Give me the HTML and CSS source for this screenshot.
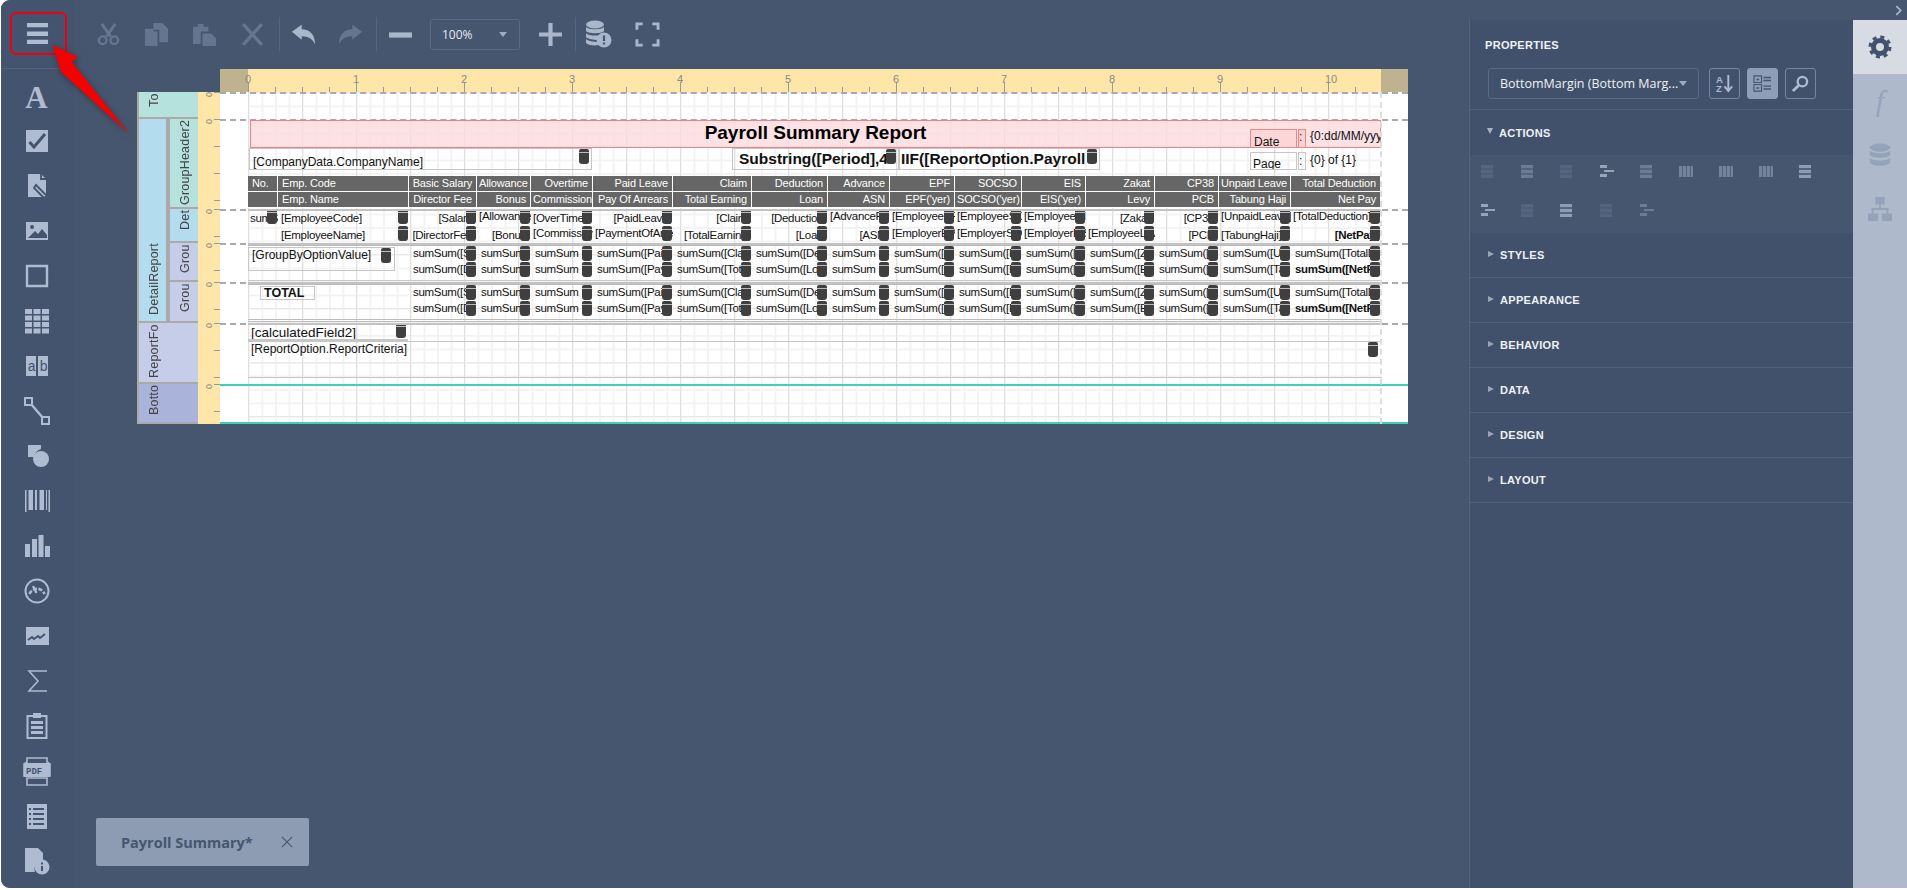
FILE: index.html
```html
<!DOCTYPE html>
<html lang="en">
<head>
<meta charset="utf-8">
<title>Report Designer</title>
<link rel="stylesheet" href="styles.css">
</head>
<body>
<div class="app">
  <aside class="tools">
    <div class="menu"><svg class="i24" viewBox="0 0 24 24"><path d="M1 1h22v4.500H1zM1 10h22v4.500H1zM1 18.500h22v4.500H1z"/></svg></div>
    <div class="tool tool-a"><span class="glyph-a">A</span></div>
    <div class="tool"><svg viewBox="0 0 32 32"><path d="M5 5h22v22H5z"/><path class="cut" d="M8.500 17l4.500 5 11-13" fill="none" stroke-width="3"/></svg></div>
    <div class="tool"><svg viewBox="0 0 32 32"><path d="M7 4h13l5 5v18H7z"/><path class="cut" d="M20 3v6h6M15 15l11 11-3 2-10-10z" fill="none" stroke-width="1.800"/></svg></div>
    <div class="tool"><svg viewBox="0 0 32 32"><path d="M5 7h22v18H5z"/><path class="cutf" d="M7 23l7-7 3 3 4-5 5 6v3z"/><circle class="cutf" cx="11" cy="12" r="2"/></svg></div>
    <div class="tool"><svg viewBox="0 0 32 32"><path d="M6 6h20v20H6z" fill="none" stroke="#aebbd0" stroke-width="2.400"/></svg></div>
    <div class="tool"><svg viewBox="0 0 32 32"><path d="M4 4h7v5H4zM12.500 4h7v5h-7zM21 4h7v5h-7zM4 10.500h7v5H4zM12.500 10.500h7v5h-7zM21 10.500h7v5h-7zM4 17h7v5H4zM12.500 17h7v5h-7zM21 17h7v5h-7zM4 23.500h7v5H4zM12.500 23.500h7v5h-7zM21 23.500h7v5h-7z"/></svg></div>
    <div class="tool"><svg viewBox="0 0 32 32"><path d="M5 6h10v20H5zM17 6h10v20H17z"/><text class="ab" x="6.500" y="21">a</text><text class="ab" x="18.500" y="21">b</text></svg></div>
    <div class="tool"><svg viewBox="0 0 32 32"><path d="M4 3h7v7H4zM21 22h7v7h-7z" fill="none" stroke="#aebbd0" stroke-width="2"/><path d="M10 9l12 14" fill="none" stroke="#aebbd0" stroke-width="2.400"/></svg></div>
    <div class="tool"><svg viewBox="0 0 32 32"><path d="M7 5h13v4a10 10 0 0 0-7 8H7z"/><circle cx="20" cy="19" r="8"/></svg></div>
    <div class="tool"><svg viewBox="0 0 32 32"><path d="M4 5h1.500v22H4zM7.500 5H12v20H7.500zM14 5h2v20h-2zM18.500 5H23v20h-4.500zM25 5h1v20h-1zM27.500 5H29v22h-1.500z"/></svg></div>
    <div class="tool"><svg viewBox="0 0 32 32"><path d="M4 14h5v13H4zM11 9h5v18h-5zM17.500 5h5v22h-5zM24 16h5v11h-5z"/></svg></div>
    <div class="tool"><svg viewBox="0 0 32 32"><circle cx="16" cy="16" r="11.500" fill="none" stroke="#aebbd0" stroke-width="2"/><path d="M8.500 19a8 8 0 0 1 15 0" fill="none" stroke="#aebbd0" stroke-width="2.600" stroke-dasharray="4 1.500"/><path d="M12 11l3.500 7" stroke="#aebbd0" stroke-width="2.400"/></svg></div>
    <div class="tool"><svg viewBox="0 0 32 32"><path d="M5 7h23v18H5z"/><path class="cut" d="M7 20l4-3 2 2 4-3 2 2 5-4" fill="none" stroke-width="2"/></svg></div>
    <div class="tool"><svg viewBox="0 0 32 32"><path d="M26 6H8l9 10-9 10h18" fill="none" stroke="#aebbd0" stroke-width="1.600"/></svg></div>
    <div class="tool"><svg viewBox="0 0 32 32"><path d="M6.500 6h19v22h-19z" fill="none" stroke="#aebbd0" stroke-width="2"/><path d="M12 3h8v5h-8zM10 11h12v3H10zM10 16h12v3H10zM10 21h12v3H10z"/></svg></div>
    <div class="tool"><svg viewBox="0 0 32 32"><path d="M6 3h20v4l3 2v12H3V9l3-2zM6 23h20v7H6z" fill="none" stroke="#aebbd0" stroke-width="1.600"/><path d="M3 8h26v14H3z"/><text class="pdf" x="5" y="19">PDF</text></svg></div>
    <div class="tool"><svg viewBox="0 0 32 32"><path d="M6 4h20v25H6z"/><path class="cut" d="M12 9h11M12 14h11M12 19h11M12 24h11M8 9h2M8 14h2M8 19h2M8 24h2" stroke-width="1.800"/></svg></div>
    <div class="tool"><svg viewBox="0 0 32 32"><path d="M4 3h13l5 5v7a9 9 0 0 0-8 12H4z"/><circle cx="21" cy="22" r="7.500"/><path class="cut" d="M21 21v5M21 17.500v2" stroke-width="2"/></svg></div>
  </aside>

  <main class="center">
    <div class="toolbar">
      <div class="tb"><svg class="off" viewBox="0 0 26 24"><path d="M6 1l9 13M20 1L11 14" fill="none" stroke-width="3"/><circle cx="7" cy="18" r="4" fill="none" stroke-width="2.400"/><circle cx="19" cy="18" r="4" fill="none" stroke-width="2.400"/></svg></div>
      <div class="tb"><svg class="off" viewBox="0 0 26 26"><path d="M1 7h9v3h4v15H1zM10 1h9l6 6v14h-9V8h-6z"/></svg></div>
      <div class="tb"><svg class="off" viewBox="0 0 26 26"><path d="M1 5h5V2h6v3h5v5H9v13H1zM11 12h9l5 5v8H11z"/></svg></div>
      <div class="tb"><svg class="off" viewBox="0 0 24 24"><path d="M3 2l18 20M21 2L3 22" fill="none" stroke-width="3.200"/></svg></div>
      <div class="sep sep-a"></div>
      <div class="tb tb-s"><svg class="on" viewBox="0 0 28 24"><path d="M1 9l11-8v5c9 0 15 6 15 17-3-6-7-9-15-9v4z"/></svg></div>
      <div class="tb tb-s"><svg class="off" viewBox="0 0 28 24"><path d="M27 9L16 1v5C7 6 1 12 1 23c3-6 7-9 15-9v4z"/></svg></div>
      <div class="sep sep-b"></div>
      <div class="tb tb-s"><svg class="on" viewBox="0 0 24 24"><path d="M1 10h22v5H1z"/></svg></div>
      <div class="zoom"><span>100%</span><i class="tri-d"></i></div>
      <div class="tb tb-plus"><svg class="on" viewBox="0 0 24 24"><path d="M1 10h9V1h4v9h9v4h-9v9h-4v-9H1z"/></svg></div>
      <div class="sep"></div>
      <div class="tb tb-db"><svg class="on" viewBox="0 0 28 28"><ellipse cx="11" cy="4.500" rx="9" ry="4"/><path d="M2 7c2 3 16 3 18 0v4c-2 3-16 3-18 0zM2 13c2 3 12 3 13 2-1 2-1 3-1 5-5 0-10-1-12-3zM2 19c2 2 7 3 12 3l1 3c-6 1-11 0-13-2z"/><circle cx="20" cy="20" r="7.500"/><path class="cut" d="M20 15.500v5.500M20 22.500v2" stroke-width="2.200"/></svg></div>
      <div class="tb tb-fs"><svg class="on" viewBox="0 0 26 26"><path d="M8 2H2v6M18 2h6v6M8 24H2v-6M18 24h6v-6" fill="none" stroke-width="3"/></svg></div>
    </div>

    <div class="ruler">
      <div class="corner corner-l"></div>
      <div class="track">
        <span>0</span><span>1</span><span>2</span><span>3</span><span>4</span><span>5</span><span>6</span><span>7</span><span>8</span><span>9</span><span>10</span>
      </div>
      <div class="corner corner-r"></div>
    </div>

    <div class="design">
      <div class="lb lb-top">To</div>
      <div class="lb lb-detail">DetailReport</div>
      <div class="lb lb-gh">GroupHeader2</div>
      <div class="lb lb-det">Det</div>
      <div class="lb lb-g1">Grou</div>
      <div class="lb lb-g2">Grou</div>
      <div class="lb lb-foot">ReportFo</div>
      <div class="lb lb-bot">Botto</div>

      <div class="lr lr1"><b>0</b></div>
      <div class="lr lr2"><b>0</b></div>
      <div class="lr lr3"><b>0</b></div>
      <div class="lr lr4"><b>0</b></div>
      <div class="lr lr5"><b>0</b></div>
      <div class="lr lr6"><b>0</b></div>
      <div class="lr lr7"><b>0</b></div>

      <div class="page">
        <section class="band band-top"></section>

        <section class="band band-gh">
          <div class="ctl title">Payroll Summary Report</div>
          <div class="ctl date-l">Date</div>
          <div class="ctl date-c">:</div>
          <div class="ctl date-v">{0:dd/MM/yyyy}</div>
          <div class="ctl page-l">Page</div>
          <div class="ctl page-c">:</div>
          <div class="ctl page-v">{0} of {1}</div>
          <div class="ctl company d">[CompanyData.CompanyName]</div>
          <div class="ctl period d">Substring([Period],4</div>
          <div class="ctl payroll d">IIF([ReportOption.Payroll</div>
          <div class="tbl thead">
            <div class="l">No.</div><div class="l">Emp. Code</div><div>Basic Salary</div><div>Allowance</div><div>Overtime</div><div>Paid Leave</div><div>Claim</div><div>Deduction</div><div>Advance</div><div>EPF</div><div>SOCSO</div><div>EIS</div><div>Zakat</div><div>CP38</div><div>Unpaid Leave</div><div>Total Deduction</div>
            <div class="l"></div><div class="l">Emp. Name</div><div>Director Fee</div><div>Bonus</div><div>Commission</div><div>Pay Of Arrears</div><div>Total Earning</div><div>Loan</div><div>ASN</div><div>EPF('yer)</div><div>SOCSO('yer)</div><div>EIS('yer)</div><div>Levy</div><div>PCB</div><div>Tabung Haji</div><div>Net Pay</div>
          </div>
        </section>

        <section class="band band-det">
          <div class="tbl tdata">
            <div class="c d">sumSum</div><div class="c d pad">[EmployeeCode]</div><div class="c d r">[Salary]</div><div class="c d hi">[Allowance]</div><div class="c d">[OverTime]</div><div class="c d r">[PaidLeave]</div><div class="c d r">[Claim]</div><div class="c d r">[Deduction]</div><div class="c d hi">[AdvanceP]</div><div class="c d hi">[EmployeeEPF]</div><div class="c d hi">[EmployeeSO]</div><div class="c d hi">[EmployeeEIS]</div><div class="c d r">[Zakat]</div><div class="c d r">[CP38]</div><div class="c d hi">[UnpaidLeave]</div><div class="c d hi">[TotalDeduction]</div>
            <div class="c"></div><div class="c d pad">[EmployeeName]</div><div class="c d r">[DirectorFee]</div><div class="c d r">[Bonus]</div><div class="c d hi">[Commission]</div><div class="c d hi">[PaymentOfArrears]</div><div class="c d r">[TotalEarning]</div><div class="c d r">[Loan]</div><div class="c d r">[ASN]</div><div class="c d hi">[EmployerEPF]</div><div class="c d hi">[EmployerSO]</div><div class="c d hi">[EmployerEIS]</div><div class="c d hi">[EmployeeLevy]</div><div class="c d r">[PCB]</div><div class="c d">[TabungHaji]</div><div class="c d r b">[NetPay]</div>
          </div>
        </section>

        <section class="band band-g1">
          <div class="ctl groupby d">[GroupByOptionValue]</div>
          <div class="tbl tsum">
            <div class="sp"></div><div class="c d">sumSum([Salary])</div><div class="c d">sumSum([Allowance])</div><div class="c d">sumSum([OverTime])</div><div class="c d">sumSum([PaidLeave])</div><div class="c d">sumSum([Claim])</div><div class="c d">sumSum([Deduction])</div><div class="c d">sumSum([Advance])</div><div class="c d">sumSum([EmployeeEPF])</div><div class="c d">sumSum([EmployeeSOCSO])</div><div class="c d">sumSum([EmployeeEIS])</div><div class="c d">sumSum([Zakat])</div><div class="c d">sumSum([CP38])</div><div class="c d">sumSum([UnpaidLeave])</div><div class="c d">sumSum([TotalDeduction])</div>
            <div class="sp"></div><div class="c d">sumSum([DirectorFee])</div><div class="c d">sumSum([Bonus])</div><div class="c d">sumSum([Commission])</div><div class="c d">sumSum([PaymentOfArrears])</div><div class="c d">sumSum([TotalEarning])</div><div class="c d">sumSum([Loan])</div><div class="c d">sumSum([ASN])</div><div class="c d">sumSum([EmployerEPF])</div><div class="c d">sumSum([EmployerSOCSO])</div><div class="c d">sumSum([EmployerEIS])</div><div class="c d">sumSum([EmployeeLevy])</div><div class="c d">sumSum([PCB])</div><div class="c d">sumSum([TabungHaji])</div><div class="c d b">sumSum([NetPay])</div>
          </div>
        </section>

        <section class="band band-g2">
          <div class="ctl total">TOTAL</div>
          <div class="tbl tsum">
            <div class="sp"></div><div class="c d">sumSum([Salary])</div><div class="c d">sumSum([Allowance])</div><div class="c d">sumSum([OverTime])</div><div class="c d">sumSum([PaidLeave])</div><div class="c d">sumSum([Claim])</div><div class="c d">sumSum([Deduction])</div><div class="c d">sumSum([Advance])</div><div class="c d">sumSum([EmployeeEPF])</div><div class="c d">sumSum([EmployeeSOCSO])</div><div class="c d">sumSum([EmployeeEIS])</div><div class="c d">sumSum([Zakat])</div><div class="c d">sumSum([CP38])</div><div class="c d">sumSum([UnpaidLeave])</div><div class="c d">sumSum([TotalDeduction])</div>
            <div class="sp"></div><div class="c d">sumSum([DirectorFee])</div><div class="c d">sumSum([Bonus])</div><div class="c d">sumSum([Commission])</div><div class="c d">sumSum([PaymentOfArrears])</div><div class="c d">sumSum([TotalEarning])</div><div class="c d">sumSum([Loan])</div><div class="c d">sumSum([ASN])</div><div class="c d">sumSum([EmployerEPF])</div><div class="c d">sumSum([EmployerSOCSO])</div><div class="c d">sumSum([EmployerEIS])</div><div class="c d">sumSum([EmployeeLevy])</div><div class="c d">sumSum([PCB])</div><div class="c d">sumSum([TabungHaji])</div><div class="c d b">sumSum([NetPay])</div>
          </div>
        </section>

        <section class="band band-foot">
          <div class="ctl calc d">[calculatedField2]</div>
          <div class="ctl criteria d">[ReportOption.ReportCriteria]</div>
        </section>

        <section class="band band-bot"></section>
      </div>
    </div>

    <div class="tab"><span>Payroll Summary*</span><svg viewBox="0 0 14 14"><path d="M1 1l12 12M13 1L1 13"/></svg></div>
  </main>

  <aside class="side">
    <div class="strip"><svg viewBox="0 0 8 12"><path d="M1.500 1l5 5-5 5"/></svg></div>
    <div class="side-body">
      <div class="panel">
        <h2 class="ptitle">PROPERTIES</h2>
        <div class="prow">
          <div class="select"><span>BottomMargin (Bottom Marg...</span><i class="tri-d"></i></div>
          <div class="pbtn"><svg viewBox="0 0 20 20"><text class="az" x="1" y="9">A</text><text class="az" x="1" y="19">Z</text><path d="M14 1v15M10 13l4 5 4-5" fill="none" stroke="#aebbd0" stroke-width="2"/></svg></div>
          <div class="pbtn pbtn-on"><svg viewBox="0 0 20 20"><path d="M1 2h8v7H1zM1 11h8v7H1z" fill="none" stroke="#46566f" stroke-width="1.200"/><path d="M3.500 5h3v1.500h-3zM3.500 14h3v1.500h-3zM11 3h8v1.500h-8zM11 6h8v1.500h-8zM11 12h8v1.500h-8zM11 15h8v1.500h-8z" fill="#46566f"/></svg></div>
          <div class="pbtn"><svg viewBox="0 0 20 20"><circle cx="12" cy="8" r="5" fill="none" stroke="#aebbd0" stroke-width="2.400"/><path d="M8 12l-6 6" stroke="#aebbd0" stroke-width="3"/></svg></div>
        </div>
        <div class="sec sec-open"><i class="tri-o"></i>ACTIONS</div>
        <div class="acts">
          <i class="ai"></i><i class="ai ai-m"></i><i class="ai"></i><i class="ai ai-h"></i><i class="ai ai-m"></i><i class="ai ai-w"></i><i class="ai ai-w"></i><i class="ai ai-w"></i><i class="ai ai-b"></i>
          <i class="ai ai-h"></i><i class="ai"></i><i class="ai ai-b"></i><i class="ai"></i><i class="ai ai-h ai-h2"></i>
        </div>
        <div class="sec"><i class="tri-r"></i>STYLES</div>
        <div class="sec"><i class="tri-r"></i>APPEARANCE</div>
        <div class="sec"><i class="tri-r"></i>BEHAVIOR</div>
        <div class="sec"><i class="tri-r"></i>DATA</div>
        <div class="sec"><i class="tri-r"></i>DESIGN</div>
        <div class="sec"><i class="tri-r"></i>LAYOUT</div>
      </div>
      <div class="rtabs">
        <div class="rt rt-on"><svg viewBox="0 0 24 24"><circle cx="12" cy="12" r="6.500" fill="none" stroke="#42526c" stroke-width="5"/><circle cx="12" cy="12" r="10" fill="none" stroke="#42526c" stroke-width="3" stroke-dasharray="4 3.850"/></svg></div>
        <div class="rt"><span class="fx">f</span></div>
        <div class="rt"><svg viewBox="0 0 24 26"><ellipse cx="12" cy="5" rx="11" ry="4.500"/><path d="M1 8c3 4 19 4 22 0v5c-3 4-19 4-22 0zM1 16c3 4 19 4 22 0v5c-3 5-19 5-22 0z"/></svg></div>
        <div class="rt"><svg viewBox="0 0 26 26"><path d="M8 0h10v8H8zM0 18h11v8H0zM15 18h11v8H15z"/><path d="M13 8v5M5 18v-5h16v5" fill="none" stroke="#95a3ba" stroke-width="2"/></svg></div>
      </div>
    </div>
  </aside>

  <div class="callout"></div>
  <svg class="arrow" viewBox="0 0 90 100"><path d="M5.700 4l25.600 12.300-6.600 4.400L82.300 93 14 30.700z"/></svg>
</div>
</body>
</html>
```

FILE: styles.css
```css
* { box-sizing: border-box; }
html, body { margin: 0; height: 100%; background: #fff; overflow: hidden; }
body { font-family: "Liberation Sans", Arial, sans-serif; }
svg { display: block; }

.app {
  position: relative;
  display: flex;
  width: 1906px;
  height: 888px;
  margin-left: 1px;
  border-radius: 9px 0 0 9px;
  overflow: hidden;
  background: #47566f;
}

/* left tool column */
.tools { width: 72px; flex: none; background: #44536e; }
.menu { height: 69px; padding: 22px 0 0 25px; border-bottom: 1px solid #51607c; }
.i24 { width: 23px; height: 23px; fill: #aebbd0; }
.tool { height: 45px; display: flex; align-items: center; justify-content: center; padding-right: 1px; }
.tool svg { width: 32px; height: 32px; fill: #aebbd0; }
.tool-a { margin-top: 4px; padding-top: 4px; }
.glyph-a { font: bold 31px/1 "Liberation Serif", serif; color: #aebbd0; }
.cut { stroke: #44536e; }
.cutf { fill: #44536e; }
.ab { font: 14px "Liberation Mono", monospace; fill: #44536e; }
.pdf { font: bold 9px "Liberation Mono", monospace; fill: #44536e; }

/* centre */
.center { position: relative; flex: 1; min-width: 0; display: flex; flex-direction: column; }
.toolbar { height: 69px; flex: none; display: flex; align-items: center; padding: 0 0 1px 11px; }
.tb { width: 48px; height: 30px; display: flex; align-items: center; justify-content: center; }
.tb svg { width: 25px; height: 25px; }
.tb-s { width: 47px; }
.tb-plus { width: 50px; margin-left: 5px; }
.tb-db { width: 44px; }
.tb-db svg { width: 28px; height: 28px; }
.tb-fs { width: 54px; }
.on { fill: #aab7cb; stroke: #aab7cb; stroke-width: 0; }
.off { fill: #66758f; stroke: #66758f; stroke-width: 0; }
.on path[fill="none"], .off path[fill="none"] { fill: none; }
.tb .cut { stroke: #47566f; }
.sep { width: 1px; height: 34px; background: #56657f; }
.sep-a { margin-left: 3px; }
.sep-b { margin-left: 2px; }
.zoom {
  width: 90px; height: 31px; margin-left: 6px;
  display: flex; align-items: center; justify-content: space-between;
  padding: 0 12px 0 11px;
  border: 1px solid #5a6984; border-radius: 3px;
  font: 12px "Open Sans", sans-serif; color: #e4e9f1;
}
.tri-d { width: 0; height: 0; border: 4.500px solid transparent; border-top: 5px solid #9eabc0; border-bottom: 0; }

/* rulers */
.ruler { flex: none; display: flex; height: 23px; width: 1188px; margin-left: 147px; }
.corner { background: #bfb28f; flex: none; }
.corner-l { width: 28px; }
.corner-r { width: 27px; }
.track {
  flex: none; width: 1133px; display: flex;
  background:
    repeating-linear-gradient(90deg, #999 0 1px, transparent 1px 108px) 0 100% / 100% 10px no-repeat,
    repeating-linear-gradient(90deg, #999 0 1px, transparent 1px 27px) 0 100% / 100% 5px no-repeat,
    #fee5a8;
}
.track span { flex: 0 0 108px; font-size: 11px; line-height: 21px; color: #8a8a8a; transform: translateX(-3px); }

/* design grid */
.design {
  flex: none;
  display: grid;
  margin-left: 64px;
  width: 1271px;
  grid-template-columns: 31px 30px 22px 1188px;
  grid-template-rows: 27px 90px 34px 39px 41px 61px 40px;
}
.lb {
  writing-mode: vertical-rl;
  transform: rotate(180deg);
  text-align: right;
  line-height: 31px;
  font-size: 12.500px;
  color: #444;
  letter-spacing: .2px;
  overflow: hidden;
  white-space: nowrap;
  border-top: 2px solid #aaa;
  border-right: 2px solid #aaa;
  padding-bottom: 1px;
}
.lb-top { grid-area: 1 / 1 / 2 / 3; background: #b5e2dc; }
.lb-detail { grid-area: 2 / 1 / 6 / 2; background: #b3dcee; padding-bottom: 124px; border-left: 2px solid #aaa; }
.lb-gh { grid-area: 2 / 2 / 3 / 3; background: #b5e2dc; }
.lb-det { grid-area: 3 / 2 / 4 / 3; background: #b3dcee; }
.lb-g1 { grid-area: 4 / 2 / 5 / 3; background: #c5cde8; }
.lb-g2 { grid-area: 5 / 2 / 6 / 3; background: #c5cde8; }
.lb-foot { grid-area: 6 / 1 / 7 / 3; background: #c5cde8; }
.lb-bot { grid-area: 7 / 1 / 8 / 3; background: #aab3d9; }

.lr {
  grid-column: 3;
  background:
    repeating-linear-gradient(#999 0 1px, transparent 1px 27px) 100% 0 / 6px 100% no-repeat,
    #fee5a8;
}
.lr b { display: block; font-weight: normal; font-size: 9px; line-height: 9px; color: #888; transform: rotate(90deg); width: 9px; margin-left: 6px; }
.lr1 { grid-row: 1; } .lr2 { grid-row: 2; } .lr3 { grid-row: 3; } .lr4 { grid-row: 4; }
.lr5 { grid-row: 5; } .lr6 { grid-row: 6; } .lr7 { grid-row: 7; }

.page {
  position: relative;
  grid-column: 4; grid-row: 1 / -1;
  display: flex; flex-direction: column;
  padding: 0 27px 0 28px;
  background-image:
    linear-gradient(90deg, #e0e0e0 1.500px, transparent 1.500px),
    linear-gradient(#e8e8e8 1px, transparent 1px),
    linear-gradient(90deg, #f3f3f3 1.500px, transparent 1.500px),
    linear-gradient(#f3f3f3 1.500px, transparent 1.500px),
    linear-gradient(#fff, #fff);
  background-size: 54px 54px, 54px 54px, 13.500px 13.500px, 13.500px 13.500px, 100% 100%;
  background-origin: content-box, content-box, content-box, content-box, border-box;
  background-clip: content-box, content-box, content-box, content-box, border-box;
}
.page::after {
  content: ""; position: absolute; top: 0; bottom: 0; right: 26px;
  border-right: 2px dashed #ddd;
}
.band { position: relative; flex: none; margin: 0 -27px 0 -28px; padding: 0 27px 0 28px; }
.band::before {
  content: ""; position: absolute; left: 0; right: 0; top: 0;
  border-top: 2px dashed #aaa;
}
.band::after {
  content: ""; position: absolute; left: 28px; right: 27px; top: 0;
  border-top: 2px solid #c2c2c2;
}
.band-top { height: 27px; }
.band-gh { height: 90px; }
.band-det { height: 34px; }
.band-g1 { height: 39px; }
.band-g2 { height: 41px; }
.band-foot { height: 61px; }
.band-top::after, .band-gh::after { border-top: 0; }
.band-bot { height: 40px; border-bottom: 2px solid #3fd0bb; }
.band-bot::before { border-top: 2px solid #3fd0bb; }
.band-bot::after { border-top-color: #3fd0bb; }

/* report controls on the free canvas */
.ctl { position: absolute; white-space: nowrap; overflow: hidden; color: #111; font-size: 12px; border: 1px solid #c6c6c6; }
.d::after {
  content: ""; position: absolute; top: 0; right: 2px;
  width: 10px; height: 15px; border-radius: 2px 2px 3px 3px;
  background: linear-gradient(#3f3f3f 0 3px, #bbb 3px 4px, #3f3f3f 4px);
}
.title {
  left: 30px; top: 1px; width: 1131px; height: 28px;
  background: rgba(253, 218, 222, .78); border: 1.500px solid #ea8387;
  text-align: center; font: bold 19px/24px "Liberation Sans", sans-serif; color: #000;
}
.date-l { left: 1030px; top: 10px; width: 47px; height: 19px; background: #fdd6d8; border-color: #e88; line-height: 25px; padding-left: 3px; }
.date-c { left: 1078px; top: 10px; width: 8px; height: 19px; background: #fbd2d4; border-color: #e88; line-height: 15px; }
.date-v { left: 1086px; top: 10px; width: 75px; height: 19px; border: 0; padding-left: 4px; line-height: 15px; }
.page-l { left: 1030px; top: 33px; width: 47px; height: 18px; line-height: 22px; padding-left: 2px; }
.page-c { left: 1078px; top: 33px; width: 8px; height: 18px; line-height: 16px; }
.page-v { left: 1086px; top: 33px; width: 75px; height: 18px; border: 0; padding-left: 4px; line-height: 16px; }
.company { left: 29px; top: 29px; width: 343px; height: 22px; padding-left: 3px; line-height: 26px; }
.period { left: 512px; top: 29px; width: 167px; height: 22px; font: bold 15.500px/20px "Liberation Sans", sans-serif; padding-left: 6px; }
.payroll { left: 679px; top: 29px; width: 201px; height: 22px; font: bold 15.500px/20px "Liberation Sans", sans-serif; padding-left: 1px; }
.groupby { left: 28px; top: 4px; width: 147px; height: 24px; padding-left: 3px; line-height: 15px; font-size: 12px; }
.groupby::after { right: 3px; top: 0; }
.total { left: 40px; top: 4px; width: 55px; height: 14px; font: bold 12.500px/13px "Liberation Sans", sans-serif; padding-left: 3px; }
.calc { left: 28px; top: 0; width: 160px; height: 18px; border-width: 0 0 2px; border-bottom-color: #c6c6c6; font-size: 13.500px; line-height: 20px; padding-left: 3px; }
.criteria { left: 28px; top: 18px; width: 1134px; height: 37px; padding-left: 3px; line-height: 15px; border-width: 1px 0 1px 0; }
.criteria::after { right: 4px; }

/* table-style rows */
.tbl {
  position: absolute; left: 28px;
  width: 1133px;
  display: grid;
  grid-template-columns: 30px 131px 68px 54px 62px 80px 79px 76px 62px 65px 67px 64px 69px 64px 72px 90px;
}
.thead { top: 57px; grid-auto-rows: 16px; font-size: 11px; letter-spacing: -.15px; color: #fff; }
.thead div {
  background: #666; text-align: right; padding: 0 4px 0 2px; line-height: 15px;
  white-space: nowrap; overflow: hidden;
  border-right: 1.500px solid #fff; border-bottom: 1px solid #fff;
}
.thead .l { text-align: left; padding-left: 4px; }
.tdata { top: 0; grid-auto-rows: 17px; }
.tsum { top: 1px; grid-template-rows: 16px 18px; border-top: 2px solid #bbb; border-bottom: 1px solid #c8c8c8; }
.band-g2 .tsum { border-bottom: 3px double #bbb; }
.sp { grid-column: span 2; }
.c { position: relative; overflow: hidden; white-space: nowrap; font-size: 11.500px; letter-spacing: -.3px; line-height: 19px; color: #111; padding: 0 2px; }
.c.d::after { right: 1px; }
.tsum .c { padding-left: 4px; line-height: 15px; white-space: normal; word-break: break-all; }
.r { text-align: right; }
.b { font-weight: bold; }
.hi { line-height: 14px; }
.pad { padding-left: 3px; }

/* document tab */
.tab {
  margin: auto 0 22px 23px;
  width: 213px; height: 48px; flex: none;
  display: flex; align-items: center;
  padding-left: 25px;
  background: #8d9cb3; border-radius: 2px;
  font: bold 14.500px "Open Sans", sans-serif; color: #46566f;
}
.tab span { width: 160px; white-space: nowrap; }
.tab svg { width: 12px; height: 12px; fill: none; stroke: #46566f; stroke-width: 1.300; }

/* right side */
.side { width: 438px; flex: none; display: flex; flex-direction: column; }
.strip { height: 20px; display: flex; justify-content: flex-end; align-items: center; padding-right: 5px; }
.strip svg { width: 7px; height: 11px; fill: none; stroke: #aab7cb; stroke-width: 2; }
.side-body { flex: 1; display: flex; }
.panel { width: 384px; flex: none; background: #42516b; border-left: 1px solid #56657f; }
.ptitle { margin: 0; padding: 18px 0 0 15px; height: 48px; font: bold 11px/14px "Liberation Sans", sans-serif; letter-spacing: .3px; color: #eef1f6; }
.prow { height: 42px; display: flex; padding-left: 18px; align-items: flex-start; border-bottom: 1px solid #51607c; }
.select {
  width: 211px; height: 31px; margin-right: 10px;
  display: flex; align-items: center; justify-content: space-between;
  padding: 0 11px 0 11px;
  border: 1px solid #5a6984; border-radius: 3px;
  font: 12.500px "Open Sans", sans-serif; color: #eef1f6; white-space: nowrap;
}
.pbtn { width: 31px; height: 31px; margin-right: 7px; padding: 5px; border: 1px solid #77859e; border-radius: 3px; }
.pbtn-on { background: #8d9eb9; border-color: #8d9eb9; }
.az { font: bold 10px "Liberation Sans", sans-serif; fill: #aebbd0; }
.sec {
  height: 45px; display: flex; align-items: center;
  padding-left: 17px;
  border-bottom: 1px solid #51607c;
  font: bold 11px "Liberation Sans", sans-serif; letter-spacing: .3px; color: #eef1f6;
}
.sec-open { border-bottom: 0; }
.tri-o { width: 0; height: 0; margin: -3px 6px 0 0; border: 3.500px solid transparent; border-top: 6px solid #aab4c6; border-bottom: 0; }
.tri-r { width: 0; height: 0; margin: -3px 6px 0 1px; border: 3.500px solid transparent; border-left: 6px solid #98a4b8; border-right: 0; }
.acts {
  height: 78px;
  background: #47566f;
  display: grid;
  grid-template-columns: repeat(9, 13px);
  column-gap: 26.700px; row-gap: 26px;
  padding: 10px 0 0 11px;
  align-content: start;
}
.ai { width: 12px; height: 13px; background: repeating-linear-gradient(#56647f 0 3px, #4e5d78 3px 5px); }
.ai-m { background: repeating-linear-gradient(#6d7b95 0 3px, #55647e 3px 5px); }
.ai-b { background: repeating-linear-gradient(#8f9cb2 0 3px, #55647e 3px 5px); }
.ai-w { width: 14px; height: 11px; margin-top: 1px; background: repeating-linear-gradient(90deg, #74829b 0 3px, #55647e 3px 4px); }
.ai-h {
  width: 14px; height: 12px;
  background:
    linear-gradient(#98a4b8, #98a4b8) 0 0 / 7px 3px no-repeat,
    linear-gradient(#98a4b8, #98a4b8) 0 9px / 7px 3px no-repeat,
    linear-gradient(#98a4b8, #98a4b8) 4px 5px / 10px 2px no-repeat;
}
.ai-h2 { opacity: .5; }
.rtabs { width: 54px; flex: none; background: #aeb9cb; }
.rt { height: 54px; display: flex; align-items: center; justify-content: center; }
.rt-on { background: #d7dce4; }
.rt svg { width: 24px; height: 24px; fill: #95a3ba; }
.fx { font: italic 30px/1 "Liberation Serif", serif; color: #95a3ba; }

/* annotation overlay */
.callout { position: absolute; left: 9px; top: 12px; width: 57px; height: 43px; border: 2px solid #ee0010; border-radius: 6px; }
.arrow { position: absolute; left: 46px; top: 41px; width: 90px; height: 100px; fill: #f60000; filter: drop-shadow(1px 2px 3px rgba(0,0,0,.35)); }
```
